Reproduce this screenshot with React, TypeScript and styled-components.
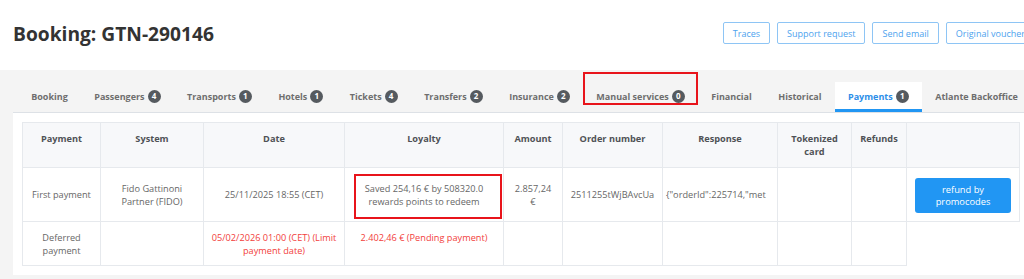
import React from "react";
import styled, { createGlobalStyle, css } from "styled-components";

const GlobalStyle = createGlobalStyle`
  html, body { margin: 0; padding: 0; }
  body {
    background: #f4f4f4;
    font-family: "Open Sans", "Noto Sans", sans-serif;
    width: 1024px;
    overflow: hidden;
  }
`;

const Page = styled.div`
  width: 1024px;
  min-height: 279px;
  background: #f4f4f4;
  overflow: hidden;
`;

const Header = styled.header`
  height: 70px;
  box-sizing: border-box;
  padding: 0 0 4px 13px;
  background: #fff;
  display: flex;
  align-items: center;
`;

const Title = styled.h1`
  flex: 1;
  margin: 0;
  font-size: 19.2px;
  font-weight: 700;
  color: #333;
`;

const Actions = styled.div`
  display: flex;
  gap: 7px;
  margin-right: -11px;
  flex-shrink: 0;
`;

const OutlineButton = styled.button`
  height: 22px;
  padding: 0 9px;
  background: #fff;
  border: 1px solid #8ec5f5;
  border-radius: 2px;
  color: #4ea3ee;
  font-family: inherit;
  font-size: 9px;
  white-space: nowrap;
  cursor: pointer;
`;

const TabBar = styled.nav`
  margin-left: 13px;
  padding: 12px 0 0 5px;
  display: flex;
  border-bottom: 1px solid #dde1e6;
`;

const Tab = styled.div<{ $active?: boolean }>`
  position: relative;
  height: 30px;
  box-sizing: border-box;
  padding: 1px 13.25px 0;
  display: flex;
  align-items: center;
  gap: 3px;
  font-size: 9px;
  font-weight: 700;
  color: #6e6e6e;
  white-space: nowrap;
  border-bottom: 3px solid transparent;
  ${(p) =>
    p.$active &&
    css`
      background: #fff;
      color: #2d8ee8;
      border-bottom-color: #2196f3;
    `}
`;

const Badge = styled.span`
  display: inline-flex;
  align-items: center;
  justify-content: center;
  width: 13px;
  height: 13px;
  border-radius: 50%;
  background: #555a5f;
  color: #fff;
  font-size: 8px;
  font-weight: 700;
  line-height: 1;
`;

const TabHighlight = styled.span`
  position: absolute;
  left: 0;
  right: 0;
  top: -10px;
  bottom: 4px;
  border: 2px solid #e8141b;
  pointer-events: none;
`;

const Panel = styled.section`
  margin-left: 13px;
  width: 1020px;
  box-sizing: border-box;
  padding: 9px;
  background: #fff;
`;

const Table = styled.table`
  width: 997px;
  table-layout: fixed;
  border-collapse: collapse;
  font-size: 9.2px;
  line-height: 12.5px;
`;

const Th = styled.th`
  padding: 10px 6px 9px;
  vertical-align: top;
  text-align: center;
  font-weight: 700;
  color: #4f5256;
  background: #f7f8fa;
  border: 1px solid #e6e9ed;
`;

const Row = styled.tr<{ $align: "top" | "middle" }>`
  vertical-align: ${(p) => p.$align};
`;

const Td = styled.td<{ $red?: boolean; $left?: boolean; $clip?: boolean; $narrow?: boolean }>`
  position: relative;
  padding: 10px ${(p) => (p.$narrow ? 9 : 5)}px 8px;
  text-align: ${(p) => (p.$left ? "left" : "center")};
  color: ${(p) => (p.$red ? "#f2403c" : "#666")};
  border: 1px solid #e6e9ed;
  ${(p) =>
    p.$clip &&
    css`
      white-space: nowrap;
      overflow: hidden;
      padding-left: 3px;
    `}
`;

const CellHighlight = styled.span`
  position: absolute;
  left: 9px;
  right: 1px;
  top: 6px;
  bottom: 2px;
  border: 2px solid #e8141b;
  pointer-events: none;
`;

const PrimaryButton = styled.button`
  width: 96px;
  height: 35px;
  padding: 0 6px;
  border: none;
  border-radius: 3px;
  background: #2196f3;
  color: #fff;
  font-family: inherit;
  font-size: 9.3px;
  line-height: 12px;
  cursor: pointer;
`;

const tabs: { label: string; count?: number; active?: boolean; highlight?: boolean }[] = [
  { label: "Booking" },
  { label: "Passengers", count: 4 },
  { label: "Transports", count: 1 },
  { label: "Hotels", count: 1 },
  { label: "Tickets", count: 4 },
  { label: "Transfers", count: 2 },
  { label: "Insurance", count: 2 },
  { label: "Manual services", count: 0, highlight: true },
  { label: "Financial" },
  { label: "Historical" },
  { label: "Payments", count: 1, active: true },
  { label: "Atlante Backoffice" },
];

const columns = [
  { title: "Payment", width: 78 },
  { title: "System", width: 103 },
  { title: "Date", width: 141 },
  { title: "Loyalty", width: 159 },
  { title: "Amount", width: 59 },
  { title: "Order number", width: 100 },
  { title: "Response", width: 115 },
  { title: "Tokenized card", width: 74 },
  { title: "Refunds", width: 55 },
  { title: "", width: 113 },
];

export default function App() {
  return (
    <Page>
      <GlobalStyle />
      <Header>
        <Title>Booking: GTN-290146</Title>
        <Actions>
          <OutlineButton>Traces</OutlineButton>
          <OutlineButton>Support request</OutlineButton>
          <OutlineButton>Send email</OutlineButton>
          <OutlineButton>Original voucher</OutlineButton>
        </Actions>
      </Header>
      <TabBar>
        {tabs.map((t) => (
          <Tab key={t.label} $active={t.active}>
            {t.label}
            {t.count !== undefined && <Badge>{t.count}</Badge>}
            {t.highlight && <TabHighlight />}
          </Tab>
        ))}
      </TabBar>
      <Panel>
        <Table>
          <colgroup>
            {columns.map((c, i) => (
              <col key={i} style={{ width: c.width }} />
            ))}
          </colgroup>
          <thead>
            <tr>
              {columns.map((c, i) => (
                <Th key={i}>{c.title}</Th>
              ))}
            </tr>
          </thead>
          <tbody>
            <Row $align="middle">
              <Td>First payment</Td>
              <Td>Fido Gattinoni Partner (FIDO)</Td>
              <Td>25/11/2025 18:55 (CET)</Td>
              <Td>
                Saved 254,16 € by 508320.0 rewards points to redeem
                <CellHighlight />
              </Td>
              <Td $narrow>2.857,24 €</Td>
              <Td>2511255tWjBAvcUa</Td>
              <Td $left $clip>{'{"orderId":225714,"met'}</Td>
              <Td />
              <Td />
              <Td>
                <PrimaryButton>refund by promocodes</PrimaryButton>
              </Td>
            </Row>
            <Row $align="top">
              <Td>Deferred payment</Td>
              <Td />
              <Td $red>05/02/2026 01:00 (CET) (Limit payment date)</Td>
              <Td $red>2.402,46 € (Pending payment)</Td>
              <Td />
              <Td />
              <Td />
              <Td />
              <Td />
            </Row>
          </tbody>
        </Table>
      </Panel>
    </Page>
  );
}
